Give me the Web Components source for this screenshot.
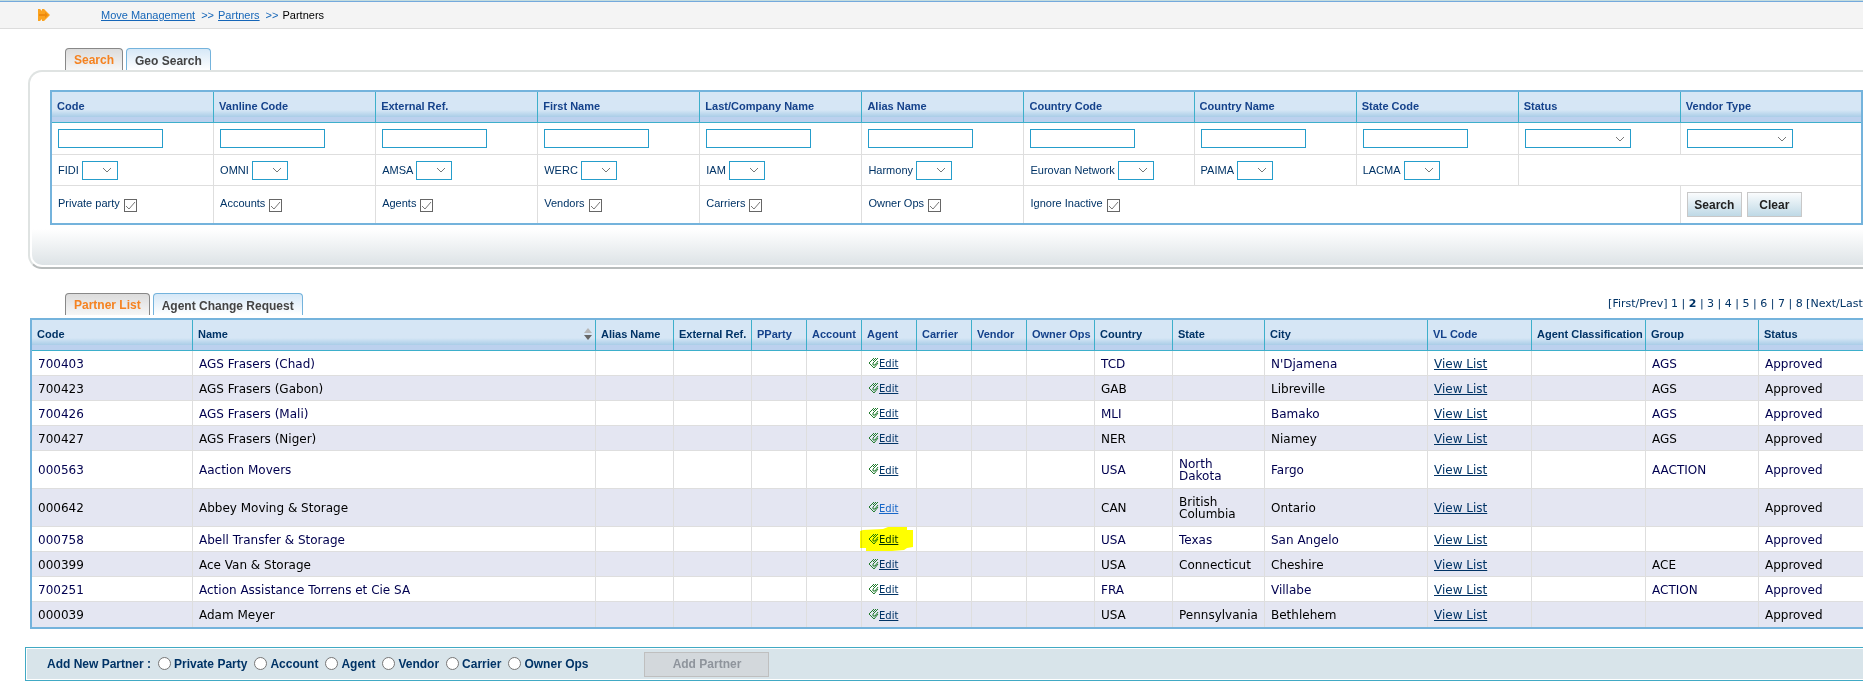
<!DOCTYPE html>
<html lang="en">
<head>
<meta charset="utf-8">
<title>Partners</title>
<style>
  body {
    margin: 0;
    overflow-x: hidden;
    background: #fff;
    color: #003366;
    font: 11px "Liberation Sans", Arial, sans-serif;
  }
</style>
</head>
<body>
<partner-page></partner-page>

<script>
const TABLE_STYLE = `
  table {
    width: 100%;
    table-layout: fixed;
    border-collapse: separate;
    border-spacing: 0;
    border: 2px solid #74b3dc;
    background: #fff;
  }
  th {
    box-sizing: border-box;
    height: 31px;
    padding: 0 0 2px 5px;
    border-right: 1px solid #3dafcb;
    border-bottom: 1px solid #3dafcb;
    background: linear-gradient(#d6e6f5 18px, #a9cde7 25px, #bcd1ee 25px);
    text-align: left;
    white-space: nowrap;
    font-weight: bold;
    color: #15428b;
  }
  td {
    box-sizing: border-box;
    padding: 0 0 0 6px;
    border-right: 1px solid #dedede;
    border-bottom: 1px solid #dedede;
  }
  th:last-child, td:last-child { border-right: 0; }
  tr:last-child td { border-bottom: 0; }
`;

const cols = widths => `<colgroup>${widths.map(w => `<col style="width:${w}px">`).join('')}</colgroup>`;

class BreadCrumb extends HTMLElement {
  connectedCallback() {
    this.attachShadow({mode: 'open'}).innerHTML = `
      <style>
        :host {
          display: block;
          border-top: 1px solid #c3dcdf;
          background: #f4f4f4;
        }
        nav {
          display: flex;
          align-items: center;
          gap: 4px;
          height: 26px;
          padding-left: 38px;
          border-top: 1px solid #74a9dc;
          border-bottom: 1px solid #dcdcdc;
        }
        svg { margin-right: 47px; }
        a { color: #1666b8; }
        span { color: #1666b8; padding-left: 2px; }
        b { color: #000; font-weight: normal; }
      </style>
      <nav>
        <svg width="12" height="12" viewBox="0 0 12 12">
          <path d="M0 0h2l2 2V0h2l6 6-6 6H4v-2l-2 2H0z" fill="#fba31f"/>
          <path d="M1 5h6V3l3 3-3 3V7H1z" fill="#ee8a0c"/>
        </svg>
        <a href="#">Move Management</a><span>&gt;&gt;</span>
        <a href="#">Partners</a><span>&gt;&gt;</span>
        <b>Partners</b>
      </nav>
    `;
  }
}

class TabStrip extends HTMLElement {
  connectedCallback() {
    const tabs = this.getAttribute('tabs').split('|');
    this.attachShadow({mode: 'open'}).innerHTML = `
      <style>
        :host {
          display: flex;
          gap: 3px;
          padding-left: 65px;
        }
        button {
          height: 22px;
          padding: 3px 8px 0;
          border: 1px solid #74b3dc;
          border-bottom: 0;
          border-radius: 4px 4px 0 0;
          background: linear-gradient(#d6e8f7, #fff);
          color: #444;
          font: bold 12px "Liberation Sans", Arial, sans-serif;
          white-space: nowrap;
        }
        button.active {
          padding-top: 1px;
          border-color: #888;
          background: linear-gradient(#dcdcdc, #f6f6f6);
          color: #f58220;
        }
      </style>
      ${tabs.map((tab, i) => `<button type="button" class="${i ? '' : 'active'}">${tab}</button>`).join('')}
    `;
  }
}

class SearchPanel extends HTMLElement {
  connectedCallback() {
    const heads = ['Code', 'Vanline Code', 'External Ref.', 'First Name', 'Last/Company Name', 'Alias Name',
      'Country Code', 'Country Name', 'State Code', 'Status', 'Vendor Type'];
    const networks = ['FIDI', 'OMNI', 'AMSA', 'WERC', 'IAM', 'Harmony', 'Eurovan Network', 'PAIMA', 'LACMA'];
    const flags = ['Private party', 'Accounts', 'Agents', 'Vendors', 'Carriers', 'Owner Ops', 'Ignore Inactive'];
    const field = (name, i) => i < 9
      ? `<td><input type="text" aria-label="${name}"></td>`
      : `<td><select class="wide" aria-label="${name}"><option></option></select></td>`;

    this.attachShadow({mode: 'open'}).innerHTML = `
      <style>
        ${TABLE_STYLE}
        :host {
          display: block;
          margin: 0 -14px 0 28px;
          padding: 18px 2px 2px;
          border: 2px solid #dfe3e2;
          border-bottom-color: #b8bcbc;
          border-radius: 14px;
        }
        form { margin: 0 10px 0 18px; }
        .fields td { height: 32px; }
        .networks td { height: 31px; }
        .flags td { height: 37px; }
        input[type=text], select {
          box-sizing: border-box;
          height: 19px;
          margin: 0;
          border: 1px solid #259dcb;
          border-radius: 0;
          background: #fff;
          vertical-align: middle;
        }
        input[type=text] { display: block; width: 105px; }
        select {
          appearance: none;
          width: 36px;
          background: #fff url('data:image/svg+xml,<svg xmlns="http://www.w3.org/2000/svg" width="10" height="6"><path d="M1 1l4 4 4-4" fill="none" stroke="%23777"/></svg>') no-repeat right 5px center;
        }
        select.wide { display: block; width: 106px; }
        label {
          display: flex;
          align-items: center;
          gap: 3px;
          white-space: nowrap;
        }
        .flags label { gap: 4px; margin-bottom: 3px; }
        input[type=checkbox] {
          appearance: none;
          width: 13px;
          height: 13px;
          margin: 4px 0 0;
          border: 1px solid #666;
          background: #fff url('data:image/svg+xml,<svg xmlns="http://www.w3.org/2000/svg" width="11" height="11"><path d="M1 6l3 3 6-7" fill="none" stroke="%23777"/></svg>') no-repeat center;
        }
        .actions { display: flex; gap: 5px; }
        button {
          width: 55px;
          height: 25px;
          padding: 0;
          border: 1px solid #c8c8c8;
          background: linear-gradient(#fafcfd, #bfd9e6);
          color: #222;
          font: bold 12px "Liberation Sans", Arial, sans-serif;
        }
        .band {
          height: 36px;
          margin-top: 4px;
          border-radius: 0 0 10px 10px;
          background: linear-gradient(#fff, #dde3e6);
        }
      </style>
      <form onsubmit="return false">
        <table>
          ${cols([162, 162, 162, 162, 162, 162, 170, 162, 162, 162, 180])}
          <thead><tr>${heads.map(h => `<th>${h}</th>`).join('')}</tr></thead>
          <tbody>
            <tr class="fields">${heads.map(field).join('')}</tr>
            <tr class="networks">
              ${networks.map(n => `<td><label>${n}<select><option></option></select></label></td>`).join('')}
              <td colspan="2"></td>
            </tr>
            <tr class="flags">
              ${flags.map((f, i) => `<td${i === 6 ? ' colspan="4"' : ''}><label>${f}<input type="checkbox" checked></label></td>`).join('')}
              <td><div class="actions"><button type="submit">Search</button><button type="reset">Clear</button></div></td>
            </tr>
          </tbody>
        </table>
      </form>
      <div class="band"></div>
    `;
  }
}

class PageLinks extends HTMLElement {
  connectedCallback() {
    this.attachShadow({mode: 'open'}).innerHTML = `
      <style>
        :host {
          display: block;
          font: 11px "DejaVu Sans", Verdana, sans-serif;
          white-space: nowrap;
        }
        a { color: #003366; text-decoration: none; }
      </style>
      [<a href="#">First</a>/<a href="#">Prev</a>] <a href="#">1</a> | <b>2</b> |
      ${[3, 4, 5, 6, 7].map(n => `<a href="#">${n}</a> | `).join('')}<a href="#">8</a>
      [<a href="#">Next</a>/<a href="#">Last</a>]
    `;
  }
}

class EditLink extends HTMLElement {
  connectedCallback() {
    this.attachShadow({mode: 'open'}).innerHTML = `
      <style>
        :host {
          display: flex;
          position: relative;
          align-items: center;
        }
        a {
          color: #003366;
          font: 10px "DejaVu Sans", Verdana, sans-serif;
        }
        :host([hot]) a { color: #1666c8; }
        .icon { margin-bottom: 2px; }
        .marker { display: none; }
        :host([marked]) .marker {
          display: block;
          position: absolute;
          left: -8px;
          top: -6px;
          mix-blend-mode: multiply;
        }
      </style>
      <svg class="icon" width="11" height="12" viewBox="0 0 11 12" fill="none" stroke="#1f7a2c">
        <path d="M6 1L1 6l5 5 4-5M10 1L5 6v2h2l3-4M8 1L5 4"/>
      </svg>
      <a href="#">Edit</a>
      <svg class="marker" width="53" height="24" viewBox="0 0 53 24">
        <path d="M0 4l3-1 20-1 5-2h19v3h6v17l-6 1-3 2-12 1H6v-3H0z" fill="#ff0"/>
      </svg>
    `;
  }
}

class PartnerList extends HTMLElement {
  connectedCallback() {
    const heads = ['Code', 'Name', 'Alias Name', 'External Ref.', 'PParty', 'Account', 'Agent', 'Carrier', 'Vendor',
      'Owner Ops', 'Country', 'State', 'City', 'VL Code', 'Agent Classification', 'Group', 'Status'];
    const plain = ['PParty', 'Account', 'Agent', 'Carrier', 'Vendor', 'Owner Ops', 'VL Code'];
    const partners = [
      ['700403', 'AGS Frasers (Chad)', 'TCD', '', "N'Djamena", 'AGS'],
      ['700423', 'AGS Frasers (Gabon)', 'GAB', '', 'Libreville', 'AGS'],
      ['700426', 'AGS Frasers (Mali)', 'MLI', '', 'Bamako', 'AGS'],
      ['700427', 'AGS Frasers (Niger)', 'NER', '', 'Niamey', 'AGS'],
      ['000563', 'Aaction Movers', 'USA', 'North<br>Dakota', 'Fargo', 'AACTION'],
      ['000642', 'Abbey Moving &amp; Storage', 'CAN', 'British<br>Columbia', 'Ontario', '', 'hot'],
      ['000758', 'Abell Transfer &amp; Storage', 'USA', 'Texas', 'San Angelo', '', 'marked'],
      ['000399', 'Ace Van &amp; Storage', 'USA', 'Connecticut', 'Cheshire', 'ACE'],
      ['700251', 'Action Assistance Torrens et Cie SA', 'FRA', '', 'Villabe', 'ACTION'],
      ['000039', 'Adam Meyer', 'USA', 'Pennsylvania', 'Bethlehem', '']
    ];
    const head = h => h === 'Name'
      ? `<th class="sorted"><div>${h}
          <svg width="8" height="12" viewBox="0 0 8 12"><path d="M0 5l4-5 4 5z" fill="#b5b5b5"/><path d="M0 7h8l-4 5z" fill="#666"/></svg>
        </div></th>`
      : `<th class="${plain.includes(h) ? '' : 'sortable'}">${h}</th>`;
    const row = ([code, name, country, state, city, group, flag = '']) => `
      <tr class="${state.includes('<br>') ? 'tall' : ''}">
        <td>${code}</td><td>${name}</td><td></td><td></td><td></td><td></td>
        <td><edit-link ${flag}></edit-link></td><td></td><td></td><td></td>
        <td>${country}</td><td>${state}</td><td>${city}</td>
        <td><a href="#">View List</a></td><td></td><td>${group}</td><td>Approved</td>
      </tr>`;

    this.attachShadow({mode: 'open'}).innerHTML = `
      <style>
        ${TABLE_STYLE}
        :host {
          display: block;
          margin: 3px -20px 0 30px;
        }
        .sortable, .sorted { color: #003366; }
        .sorted div {
          display: flex;
          justify-content: space-between;
          align-items: center;
          padding-right: 3px;
        }
        td {
          height: 25px;
          padding-top: 1px;
          color: #00004f;
          font: 12px/12px "DejaVu Sans", Verdana, sans-serif;
        }
        .tall td { height: 38px; }
        tbody tr:nth-child(even) td { background: #e4e6f2; color: #000; }
        td a { color: #003366; }
      </style>
      <table>
        ${cols([161, 403, 78, 78, 55, 55, 55, 55, 55, 68, 78, 92, 163, 104, 114, 113, 122])}
        <thead><tr>${heads.map(head).join('')}</tr></thead>
        <tbody>${partners.map(row).join('')}</tbody>
      </table>
    `;
  }
}

class AddPartner extends HTMLElement {
  connectedCallback() {
    const types = ['Private Party', 'Account', 'Agent', 'Vendor', 'Carrier', 'Owner Ops'];
    this.attachShadow({mode: 'open'}).innerHTML = `
      <style>
        :host {
          display: block;
          margin: 18px -14px 0 25px;
          padding: 1px;
          border: 1px solid #41a9c4;
          font-size: 12px;
          font-weight: bold;
        }
        form {
          display: flex;
          align-items: center;
          gap: 7px;
          height: 30px;
          padding-left: 20px;
          background: #d8e4ea;
        }
        label { display: flex; align-items: center; gap: 3px; }
        input {
          appearance: none;
          width: 13px;
          height: 13px;
          margin: 0 0 2px;
          border: 1px solid #777;
          border-radius: 50%;
          background: #fff;
        }
        button {
          width: 125px;
          height: 25px;
          margin-left: 49px;
          border: 1px solid #bfbfbf;
          background: #d3d8dc;
          color: #8e949c;
          font: bold 12px "Liberation Sans", Arial, sans-serif;
        }
      </style>
      <form onsubmit="return false">
        <span>Add New Partner :</span>
        ${types.map(t => `<label><input type="radio" name="type">${t}</label>`).join('')}
        <button type="submit" disabled>Add Partner</button>
      </form>
    `;
  }
}

class PartnerPage extends HTMLElement {
  connectedCallback() {
    this.attachShadow({mode: 'open'}).innerHTML = `
      <style>
        :host { display: block; overflow: hidden; }
        .search-tabs { margin-top: 19px; }
        .list-bar {
          display: flex;
          justify-content: space-between;
          align-items: flex-end;
          margin: 24px -4px 0 0;
        }
        page-links { margin-bottom: 5px; }
      </style>
      <bread-crumb></bread-crumb>
      <tab-strip class="search-tabs" tabs="Search|Geo Search"></tab-strip>
      <search-panel></search-panel>
      <div class="list-bar">
        <tab-strip tabs="Partner List|Agent Change Request"></tab-strip>
        <page-links></page-links>
      </div>
      <partner-list></partner-list>
      <add-partner></add-partner>
    `;
  }
}

customElements.define('bread-crumb', BreadCrumb);
customElements.define('tab-strip', TabStrip);
customElements.define('search-panel', SearchPanel);
customElements.define('page-links', PageLinks);
customElements.define('edit-link', EditLink);
customElements.define('partner-list', PartnerList);
customElements.define('add-partner', AddPartner);
customElements.define('partner-page', PartnerPage);
</script>
</body>
</html>
